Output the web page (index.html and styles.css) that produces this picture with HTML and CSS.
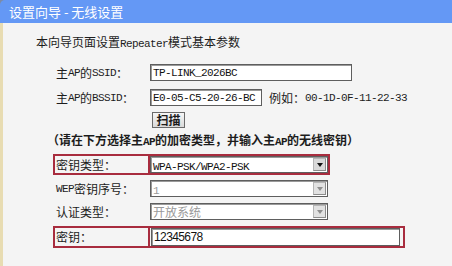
FILE: index.html
```html
<!DOCTYPE html>
<html lang="zh-CN">
<head>
<meta charset="utf-8">
<title>设置向导 - 无线设置</title>
<link rel="stylesheet" href="styles.css">
</head>
<body>
<div class="win">
  <div class="title">设置向导 - 无线设置</div>
  <div class="content">
    <p class="intro">本向导页面设置<span class="a">Repeater</span>模式基本参数</p>

    <div class="row r-ssid">
      <div class="label">主<span class="a">AP</span>的<span class="a">SSID</span>：</div>
      <div class="field w-ssid"><span class="a">TP-LINK_2026BC</span></div>
    </div>

    <div class="row r-bssid">
      <div class="label">主<span class="a">AP</span>的<span class="a">BSSID</span>：</div>
      <div class="field w-bssid"><span class="a">E0-05-C5-20-26-BC</span></div>
      <div class="hint">例如：<span class="a">00-1D-0F-11-22-33</span></div>
    </div>

    <div class="row r-btn">
      <div class="label"></div>
      <div class="btn">扫描</div>
    </div>

    <p class="notice">（请在下方选择主<span class="a">AP</span>的加密类型，并输入主<span class="a">AP</span>的无线密钥）</p>

    <div class="row red r-type">
      <div class="label">密钥类型：</div>
      <div class="select">
        <span class="val"><span class="a">WPA-PSK/WPA2-PSK</span></span>
        <span class="arrow"><span class="tri"></span></span>
      </div>
    </div>

    <div class="row r-wep">
      <div class="label"><span class="a">WEP</span>密钥序号：</div>
      <div class="select disabled">
        <span class="val"><span class="a">1</span></span>
        <span class="arrow"><span class="tri"></span></span>
      </div>
    </div>

    <div class="row r-auth">
      <div class="label">认证类型：</div>
      <div class="select disabled">
        <span class="val">开放系统</span>
        <span class="arrow"><span class="tri"></span></span>
      </div>
    </div>

    <div class="row red r-key">
      <div class="label">密钥：</div>
      <div class="field w-key"><span class="num">12345678</span></div>
    </div>
  </div>
</div>
</body>
</html>
```

FILE: styles.css
```css
html, body {
  margin: 0;
  padding: 0;
}

body {
  width: 452px;
  height: 266px;
  overflow: hidden;
  background: #7d8ba6;
  font-family: "Noto Sans CJK SC", "Liberation Sans", sans-serif;
  font-size: 12px;
  color: #1c1c1c;
}

.win {
  width: 452px;
  height: 266px;
}

.title {
  height: 23px;
  line-height: 23px;
  padding-left: 9px;
  background: #6498f5;
  color: #ffffff;
  font-size: 13px;
  border-top-left-radius: 5px;
}

.content {
  height: 243px;
  box-sizing: border-box;
  padding-top: 11px;
  border-left: 3px solid #e8dcb2;
  background: #f4f4f4;
}

.a {
  font-family: "Liberation Mono", monospace;
  font-size: 11px;
  letter-spacing: -0.6px;
}

.intro {
  margin: 0 0 0 33px;
  line-height: 16px;
  height: 16px;
}

.row {
  display: flex;
  align-items: stretch;
  width: fit-content;
  margin-left: 50px;
  border: 2px solid transparent;
}

.row.red {
  border-color: #a82c3e;
}

.label {
  width: 95px;
  flex: none;
  box-sizing: border-box;
  padding-left: 1px;
  display: flex;
  align-items: center;
  line-height: 16px;
  white-space: nowrap;
}

.row.red .label {
  border-right: 2px solid #a82c3e;
}

.r-ssid { margin-top: 12px; }
.r-bssid { margin-top: 4px; }
.r-btn { margin-top: 2px; }
.r-type { margin-top: 6px; }
.r-wep { margin-top: 3px; }
.r-auth { margin-top: 2px; }
.r-key { margin-top: 4px; padding-right: 3px; }

.field {
  height: 17px;
  box-sizing: border-box;
  background: #ffffff;
  border: 1px solid #5e5e5e;
  box-shadow: inset 1px 1px 0 #9a9a9a;
  padding-left: 2px;
  display: flex;
  align-items: center;
  color: #111;
  white-space: nowrap;
}

.w-ssid { width: 202px; }
.w-bssid { width: 112px; }
.w-key { width: 249px; height: 18px; margin-left: 1px; }

.num {
  font-family: "Liberation Sans", sans-serif;
  font-size: 12px;
  letter-spacing: -0.6px;
}

.hint {
  margin-left: 7px;
  display: flex;
  align-items: center;
  white-space: nowrap;
}

.btn {
  margin-left: 2px;
  width: 33px;
  height: 16px;
  box-sizing: border-box;
  border: 1px solid #6a6a6a;
  background: linear-gradient(#f6f6f6, #dadada);
  text-align: center;
  line-height: 14px;
  font-weight: bold;
  font-size: 12px;
}

.notice {
  margin: 2px 0 0 44px;
  line-height: 16px;
  height: 16px;
  font-weight: bold;
  white-space: nowrap;
}

.select {
  width: 178px;
  height: 17px;
  box-sizing: border-box;
  background: #ffffff;
  border: 1px solid #5e5e5e;
  box-shadow: inset 1px 1px 0 #9a9a9a;
  display: flex;
  align-items: center;
  padding-left: 2px;
  color: #111;
}

.select .val {
  flex: 1;
  white-space: nowrap;
}

.select .arrow {
  width: 13px;
  height: 13px;
  box-sizing: border-box;
  margin-right: 1px;
  background: #d9d9d9;
  border: 1px solid #b5b5b5;
  border-right-color: #8c8c8c;
  border-bottom-color: #8c8c8c;
  display: flex;
  align-items: center;
  justify-content: center;
}

.select .tri {
  width: 0;
  height: 0;
  border-left: 3px solid transparent;
  border-right: 3px solid transparent;
  border-top: 4px solid #111;
}

.select.disabled {
  color: #9a9a9a;
}

.select.disabled .arrow {
  background: #e2e2e2;
}

.select.disabled .tri {
  border-top-color: #8e8e8e;
}
```
